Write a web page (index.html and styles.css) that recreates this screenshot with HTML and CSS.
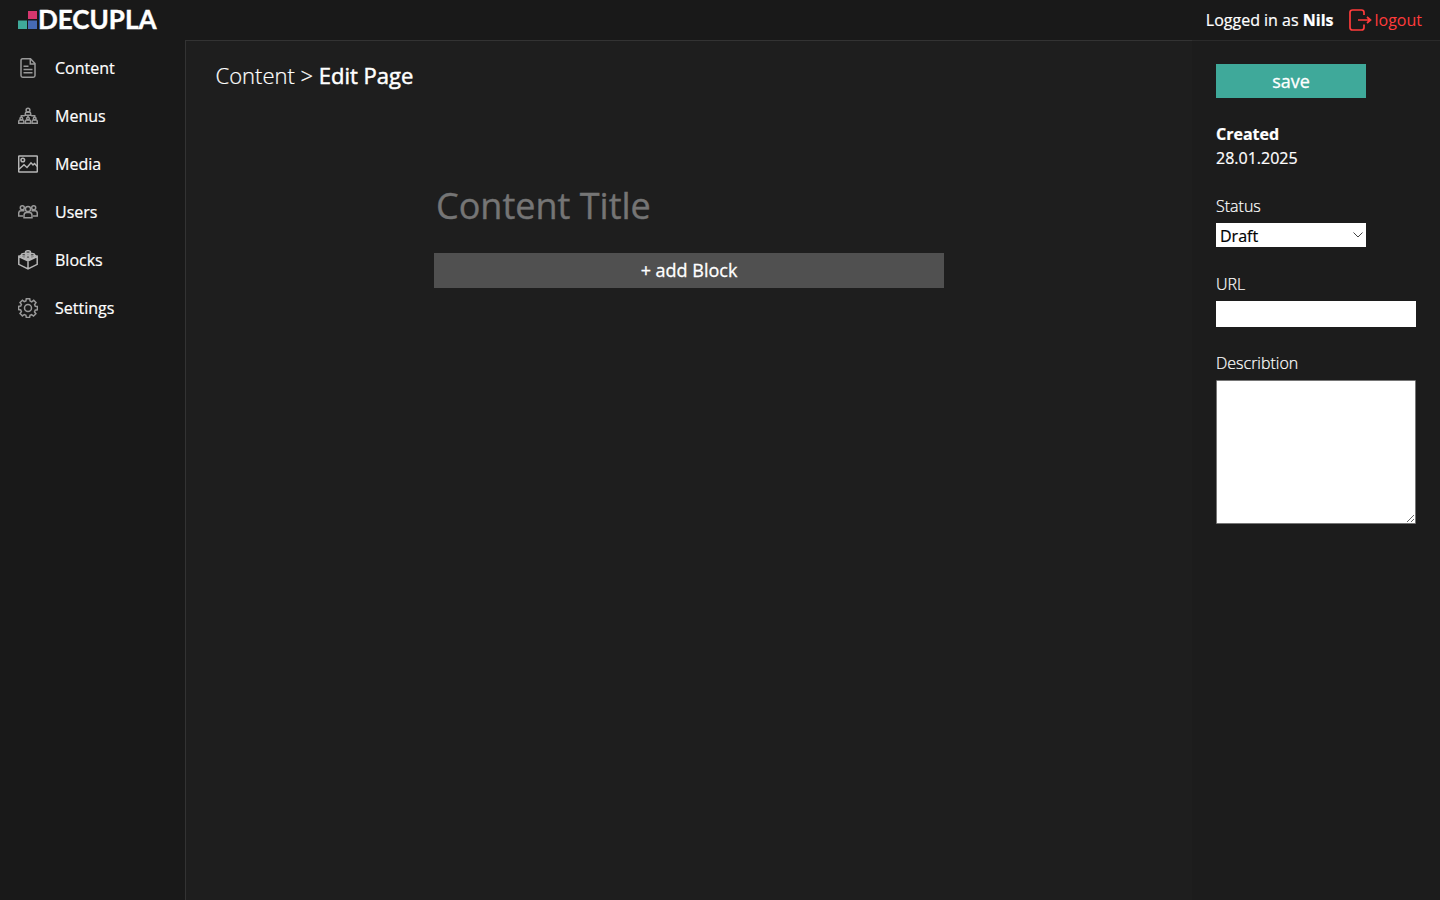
FILE: index.html
```html
<!DOCTYPE html>
<html lang="en">
<head>
<meta charset="utf-8">
<title>Edit Page</title>
<link rel="stylesheet" href="styles.css">
</head>
<body>
<header class="topbar">
  <div class="logo">
    <svg class="logo-mark" width="20" height="20" viewBox="0 0 20 20"><path fill="#d5366f" d="M10 1h9v8h-9z"/><path fill="#3fa99a" d="M0 10.500h9V19H0z"/><path fill="#466bb5" d="M10 10.500h9V19h-9z"/></svg><span class="logo-text">DECUPLA</span>
  </div>
  <div class="account">
    <span class="user">Logged in as <b>Nils</b></span>
    <a class="logout"><svg width="24" height="24" viewBox="0 0 24 24"><path d="M16 7V4.500Q16 2 13.500 2H4.500Q2 2 2 4.500v15Q2 22 4.500 22h9q2.500 0 2.500-2.500V16.500M10 12H21.500M19 9L22.500 12L19 15"/></svg><span>logout</span></a>
  </div>
</header>
<div class="shell">
  <nav class="sidebar">
    <a class="nav-item"><svg viewBox="0 0 20 20"><path d="M4.500.800h8L17 5.500v12q0 1.700-1.700 1.700H4.700Q3 19.200 3 17.500v-15Q3 .800 4.500.800zM12.300 1v5H17M5.500 8.300h5M5.500 11.600h9M5.500 14.800h9"/></svg>Content</a>
    <a class="nav-item"><svg viewBox="0 0 20 20"><circle cx="10" cy="4.200" r="1.900"/><path d="M7.300 9.300V7.800Q7.300 6.300 8.500 6.300h3q1.200 0 1.200 1.500v1.500zM10 9.300v2M3.300 11.500V9.700h3.500M16.700 11.500V9.700h-3.500"/><g id="node"><circle cx="3.300" cy="12.600" r="1.300"/><path d="M.700 17.300v-1.500q0-1.700 1.200-1.700h2.800q1.200 0 1.200 1.700v1.500z"/></g><use href="#node" x="6.700"/><use href="#node" x="13.400"/></svg>Menus</a>
    <a class="nav-item"><svg class="bright" viewBox="0 0 20 20"><rect x=".7" y="2" width="18.600" height="16" rx=".5"/><circle cx="4.800" cy="6" r="1.800"/><path d="M1 15.300l5-4.500 3 2.700 4-4.700 2 2.200 1.500-1.500 2.800 3"/></svg>Media</a>
    <a class="nav-item"><svg viewBox="0 0 20 20"><circle cx="4.300" cy="5.800" r="2"/><circle cx="15.700" cy="5.800" r="2"/><circle cx="10" cy="7" r="2.600"/><path d="M6 15.800v-2.500q0-2.700 2.700-2.700h2.600q2.700 0 2.700 2.700v2.500zM5 14H.700v-2.800Q.700 8.800 3 8.800h3.500M15 14h4.300v-2.800q0-2.400-2.300-2.400h-3.500"/></svg>Users</a>
    <a class="nav-item"><svg class="bright" viewBox="0 0 20 20"><path d="M.800 6.500L10 11l9.200-4.500v7.800L10 19l-9.200-4.700zM10 11v8M.800 6.500L4 5M19.200 6.500L16 5M7.500 2.200v2q2.500 1.500 5 0v-2M3.500 5v2.200q2.500 1.500 5 0V5M11.500 5v2.200q2.500 1.500 5 0V5M7.500 7v2q2.500 1.500 5 0V7"/><ellipse cx="10" cy="2" rx="2.500" ry="1.300"/><ellipse cx="6" cy="4.800" rx="2.500" ry="1.300"/><ellipse cx="14" cy="4.800" rx="2.500" ry="1.300"/><ellipse cx="10" cy="7" rx="2.500" ry="1.300"/></svg>Blocks</a>
    <a class="nav-item"><svg viewBox="0 0 20 20"><path d="M8.300.700h3.400l.4 2.400 1.600.700 2-1.500L18 4.600l-1.400 2 .7 1.600 2.100.3v3.300l-2.200.400-.7 1.600 1.400 1.900-2.400 2.400-1.900-1.400-1.600.7-.4 2H8.300l-.4-2.200-1.600-.7-1.900 1.400L2 15.500l1.400-1.900-.7-1.600-2.100-.4V8.300l2.100-.3.700-1.600L2 4.600l2.400-2.400 1.900 1.500 1.600-.7z"/><circle cx="10" cy="10" r="3.500"/></svg>Settings</a>
  </nav>
  <main class="main">
    <h1 class="crumb">Content &gt; <b>Edit Page</b></h1>
    <div class="editor">
      <input class="title" placeholder="Content Title">
      <button class="add">+ add Block</button>
    </div>
  </main>
  <aside class="details">
    <button class="save">save</button>
    <div class="created"><b>Created</b><br>28.01.2025</div>
    <label class="label">Status</label>
    <div class="select"><span>Draft</span><svg width="10" height="6" viewBox="0 0 10 6"><path d="M.5.500L5 5L9.500.500"/></svg></div>
    <label class="label">URL</label>
    <input class="url">
    <label class="label">Describtion</label>
    <textarea class="desc"></textarea>
  </aside>
</div>
</body>
</html>
```
FILE: styles.css
```css
* { box-sizing: border-box; }
body {
  margin: 0;
  height: 900px;
  display: flex;
  flex-direction: column;
  overflow: hidden;
  background: #191919;
  color: #fff;
  font: 400 16px/24px "Open Sans", sans-serif;
  -webkit-text-stroke: 0.2px;
}
input, button, textarea { font-family: inherit; border-radius: 0; }
.topbar {
  height: 40px;
  flex: none;
  display: flex;
  justify-content: space-between;
  align-items: center;
  padding: 0 18px;
}
.logo { display: flex; align-items: center; height: 40px; }
.logo-text { font: 700 26px/39px Lato, sans-serif; padding-bottom: 1px; -webkit-text-stroke: 0.4px #fff; }
.account { display: flex; align-items: center; gap: 14px; }
.logout { display: flex; align-items: center; gap: 3px; color: #ff3b3b; -webkit-text-stroke: 0; }
.logout svg { fill: none; stroke: currentColor; stroke-width: 1.7; }
.shell { flex: 1; display: flex; }
.sidebar { width: 185px; padding-top: 4px; flex: none; }
.nav-item {
  height: 48px;
  padding-left: 18px;
  display: flex;
  align-items: center;
  gap: 17px;
}
.nav-item svg { width: 20px; height: 20px; fill: none; stroke: #999; stroke-width: 1.5; }
.nav-item svg.bright { stroke: #b5b5b5; }
.main {
  flex: 1;
  background: #1e1e1e;
  border-left: 1px solid #333;
  border-top: 1px solid #333;
  padding: 19px 30px;
}
.crumb { margin: 0 0 0 -0.5px; font-size: 22px; font-weight: 300; line-height: 30px; }
.crumb b { font-weight: 400; -webkit-text-stroke: 0.5px; }
.editor { width: 510px; margin: 86px auto 0; display: flex; flex-direction: column; }
.title {
  height: 57px;
  border: 0;
  padding: 3px 2px 1px;
  background: transparent;
  color: #fff;
  font-size: 36px;
  -webkit-text-stroke: 0.4px;
}
.title::placeholder { color: #757575; }
.add {
  height: 35px;
  margin-top: 20px;
  padding: 0 0 2px;
  border: 0;
  background: #505050;
  color: #fff;
  font-size: 18px;
  -webkit-text-stroke: 0.3px;
}
.details {
  width: 248px;
  background: #1c1c1c;
  border-top: 1px solid #2a2a2a;
  padding: 23.400px 24px 0;
  display: flex;
  flex-direction: column;
  align-items: flex-start;
}
.save {
  width: 150px;
  height: 33.600px;
  padding: 0 0 1px;
  border: 0;
  background: #3fa99a;
  color: #fff;
  font-size: 18px;
  -webkit-text-stroke: 0.3px;
}
.created { margin: 24px 0; }
.label { font-weight: 300; }
.select {
  width: 150px;
  height: 24px;
  margin: 5px 0 25px;
  padding: 0 3px 0 4px;
  background: #fff;
  color: #000;
  display: flex;
  align-items: center;
  justify-content: space-between;
}
.select span { padding-top: 2px; }
.select svg { fill: none; stroke: #444; }
.url { width: 200px; height: 26px; border: 0; margin: 5px 0 24px; }
.desc { width: 200px; height: 144px; margin: 5px 0 0; border: 1px solid #767676; border-radius: 1px; background: #fff; }
```
